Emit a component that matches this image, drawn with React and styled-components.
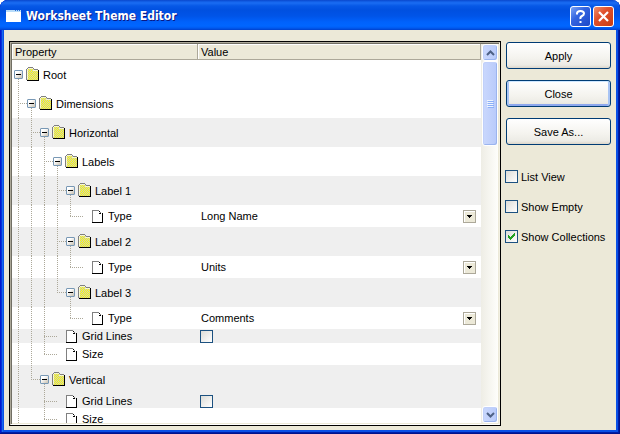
import React, { useId, useState } from 'react';
import styled, { createGlobalStyle, css } from 'styled-components';

const INK = '#000';
const FACE = '#ece9d8';
const SHADE = '#aca899';
const STRIPE = '#efefef';

const GlobalStyle = createGlobalStyle`
  *, *::before, *::after { box-sizing: border-box; }
  body {
    margin: 0;
    background: #fff;
    color: ${INK};
    font: 11px/14px "Liberation Sans", Arial, sans-serif;
  }
  button, select, input { font: inherit; color: inherit; }
`;

const Window = styled.main`
  display: flex;
  flex-direction: column;
  height: 100vh;
  padding: 0 4px 4px;
  overflow: hidden;
  border-radius: 8px 8px 0 0;
  background: #0a50e6;
  box-shadow:
    inset -1px -1px #00138c,
    inset 1px 0 #0019cf,
    inset -2px -2px #001ea8,
    inset 2px 0 #0831d9,
    inset 3px 0 #166aee;
`;

const TitleBar = styled.header`
  display: flex;
  flex: none;
  align-items: center;
  gap: 5px;
  height: 30px;
  margin: 0 -4px;
  padding: 2px 6px 0;
  background: linear-gradient(
    #0a47cc 0, #1464ec 2px, #1a6cf2 3px, #0658e6 6px, #0050e0 10px,
    #0054e8 16px, #0062fc 22px, #0066ff 26px, #005af0 28px, #0040cc 30px
  );
`;

const Title = styled.h1`
  flex: 1;
  margin: 0;
  color: #fff;
  font: bold 12px/16px "DejaVu Sans Condensed", "DejaVu Sans", sans-serif;
  text-shadow: 1px 1px #0a1883;
`;

const CaptionButtons = styled.div`
  display: flex;
  gap: 2px;
`;

const CaptionButton = styled.button`
  display: grid;
  place-items: center;
  width: 21px;
  height: 21px;
  padding: 0;
  border: 1px solid #fff;
  border-radius: 3px;
  background: ${(p) =>
    p.$danger
      ? 'linear-gradient(135deg, #f0906c, #e0502c 40%, #c83c10)'
      : 'linear-gradient(135deg, #7ca4f4, #3464e0 40%, #1c48c8)'};
`;

const Body = styled.div`
  display: flex;
  flex: 1;
  gap: 4px;
  min-height: 0;
  padding: 11px 5px 4px;
  background: ${FACE};
`;

const ListFrame = styled.section`
  display: flex;
  flex: 1;
  min-width: 0;
  border: 1px solid ${INK};
`;

const ListInner = styled.div`
  display: flex;
  flex: 1;
  min-width: 0;
  overflow: hidden;
  border: 1px solid;
  border-color: ${SHADE} #f1efe2 #fff ${SHADE};
  box-shadow: inset 1px 1px #716f64, inset -1px -1px ${FACE};
  padding: 1px;
  background: #fff;
`;

const Viewport = styled.div`
  flex: 1;
  min-width: 0;
  overflow: hidden;
`;

const Grid = styled.table`
  width: 100%;
  table-layout: fixed;
  border-spacing: 0;
`;

const HeadCell = styled.th`
  width: ${(p) => p.$width || 'auto'};
  height: 16px;
  padding: 0 3px;
  border-right: 1px solid ${SHADE};
  border-bottom: 1px solid ${SHADE};
  background: ${FACE};
  box-shadow: inset 1px 1px #fff;
  font-weight: normal;
  text-align: left;
`;

const Row = styled.tr`
  background: ${(p) => (p.$striped ? STRIPE : '#fff')};
`;

const Cell = styled.td`
  padding: 0;
`;

const TreeCell = styled.div`
  display: flex;
  align-items: center;
  height: ${(p) => p.$height}px;
  padding-left: 2px;
  white-space: nowrap;
`;

const dotsDown = `repeating-linear-gradient(${SHADE} 0 1px, transparent 1px 2px)`;
const dotsAcross = `repeating-linear-gradient(90deg, ${SHADE} 0 1px, transparent 1px 2px)`;

const guideStyles = {
  blank: css``,
  line: css`
    background: ${dotsDown} 4px 0 / 1px 100% no-repeat;
  `,
  tee: css`
    background:
      ${dotsDown} 4px 0 / 1px 100% no-repeat,
      ${dotsAcross} 4px 50% / 9px 1px no-repeat;
  `,
  end: css`
    background:
      ${dotsDown} 4px 0 / 1px 50% no-repeat,
      ${dotsAcross} 4px 50% / 9px 1px no-repeat;
  `,
};

const Guide = styled.span`
  flex: none;
  align-self: stretch;
  width: 13px;
  ${(p) => guideStyles[p.$kind]}
`;

const Knot = styled.span`
  display: flex;
  flex: none;
  align-items: center;
  align-self: stretch;
  width: 12px;
  background: ${(p) =>
    p.$leaf
      ? `${dotsAcross} 1px 50% / 4px 1px no-repeat`
      : `${dotsDown} 4px 100% / 1px 50% no-repeat`};
`;

const Expander = styled.button`
  display: grid;
  place-items: center;
  width: 9px;
  height: 9px;
  padding: 0;
  border: 1px solid #7898b5;
  border-radius: 1px;
  background: linear-gradient(135deg, #fff 30%, #c8c0b0);
`;

const Icon = styled.svg`
  flex: none;
  display: block;
  shape-rendering: crispEdges;
`;

const Name = styled.span`
  margin-left: 4px;
`;

const ValueCell = styled.div`
  display: flex;
  align-items: center;
  height: ${(p) => p.$height}px;
  padding: 0 5px 0 2px;
`;

const Picker = styled.span`
  display: grid;
  flex: 1;
  align-items: center;
`;

const PickerSelect = styled.select`
  grid-area: 1 / 1;
  width: 100%;
  padding: 0 16px 0 1px;
  border: 0;
  outline: 0;
  appearance: none;
  background: transparent;
`;

const PickerArrow = styled.span`
  display: grid;
  place-items: center;
  grid-area: 1 / 1;
  justify-self: end;
  width: 13px;
  height: 13px;
  border: 1px solid ${SHADE};
  background: ${FACE};
  box-shadow: inset 1px 1px #fff;
  pointer-events: none;
`;

const CheckBox = styled.span`
  display: grid;
  flex: none;
  place-items: center;
  width: 13px;
  height: 13px;
`;

const CheckInput = styled.input`
  grid-area: 1 / 1;
  width: 13px;
  height: 13px;
  margin: 0;
  appearance: none;
  border: 1px solid #1c5180;
  background: linear-gradient(135deg, #dcdcd7, #fff);
`;

const CheckMark = styled(Icon)`
  grid-area: 1 / 1;
  pointer-events: none;
`;

const ScrollTrack = styled.div`
  display: flex;
  flex: none;
  flex-direction: column;
  width: 17px;
  padding-left: 1px;
  background: linear-gradient(90deg, #eeede5, #fefefb);
`;

const scrollFace = css`
  display: grid;
  place-items: center;
  flex: none;
  width: 16px;
  padding: 0;
  border: 1px solid #fff;
  border-radius: 3px;
  background: linear-gradient(90deg, #cad8fd, #b8cafa);
  box-shadow: inset -1px -1px #9ab4ee, inset 1px 1px #c0d0fa;
`;

const ScrollButton = styled.button`
  ${scrollFace}
  height: 17px;
`;

const ScrollThumb = styled.div`
  ${scrollFace}
  height: 85px;
`;

const ScrollGap = styled.div`
  flex: 1;
`;

const Sidebar = styled.aside`
  display: flex;
  flex: none;
  flex-direction: column;
  gap: 25px;
  width: 106px;
`;

const Actions = styled.div`
  display: flex;
  flex-direction: column;
  gap: 11px;
  padding: 1px 0 0 1px;
`;

const PushButton = styled.button`
  height: 27px;
  padding: 0;
  border: 1px solid #003c74;
  border-radius: 3px;
  background: linear-gradient(#fff, #f4f3ee 60%, #ecebe5 88%, #dcd6ca);
  box-shadow: ${(p) =>
    p.$default
      ? 'inset 0 1px #cee7ff, inset 2px 0 #a8c4f4, inset -2px 0 #a8c4f4, inset 0 -2px #8ea8ee'
      : 'none'};
`;

const Options = styled.div`
  display: flex;
  flex-direction: column;
  gap: 17px;
`;

const Option = styled.label`
  display: flex;
  align-items: center;
  gap: 3px;
  height: 13px;
  white-space: nowrap;
`;

function FolderIcon() {
  const id = useId();
  return (
    <Icon width="13" height="15" viewBox="0 0 13 15" aria-hidden="true">
      <defs>
        <pattern id={id} width="2" height="2" patternUnits="userSpaceOnUse">
          <rect width="2" height="2" fill="#ffff00" />
          <rect x="1" width="1" height="1" fill="#c8c8c8" />
          <rect y="1" width="1" height="1" fill="#c8c8c8" />
        </pattern>
      </defs>
      <path d="M1 2h1V1h5v1h1v1h4v10H1z" fill={`url(#${id})`} />
      <path d="M2 0h5v1H2zM1 1h1v1H1zM7 1h1v1H7zM0 2h1v11H0zM8 2h4v1H8z" fill="#808080" />
      <path d="M2 1h5v1H2zM1 2h1v10H1zM7 3h5v1H7z" fill="#fff" opacity=".7" />
      <path d="M12 3h1v11H1v-1h11z" fill="#000" />
    </Icon>
  );
}

function FileIcon() {
  return (
    <Icon width="13" height="13" viewBox="0 0 13 13" aria-hidden="true">
      <path d="M2 1h6v1h1v1h1v1h1v8H2z" fill="#fff" />
      <path d="M1 0h7v1H1zM1 1h1v11H1zM8 1h1v1H8zM9 2h1v1H9z" fill="#808080" />
      <path d="M8 1h1v2h1v1h1v8H1v1h11V3h-1v1H8z" fill="#000" />
      <path d="M8 2h1v1H8z" fill="#fff" />
    </Icon>
  );
}

function Check({ checked, onChange, label, id }) {
  return (
    <CheckBox>
      <CheckInput type="checkbox" id={id} aria-label={label} checked={checked} onChange={onChange} />
      {checked && (
        <CheckMark width="7" height="7" viewBox="0 0 7 7" aria-hidden="true">
          <path d="M0 2h1v1h1v1h1V3h1V2h1V1h1V0h1v3H6v1H5v1H4v1H3v1H2V6H1V5H0z" fill="#21a121" />
        </CheckMark>
      )}
    </CheckBox>
  );
}

function Chevron({ down }) {
  return (
    <svg width="9" height="6" viewBox="0 0 9 6" aria-hidden="true">
      <path d={down ? 'M1 1l3.500 3.500L8 1' : 'M1 5l3.500-3.500L8 5'} fill="none" stroke="#4d6185" strokeWidth="2" />
    </svg>
  );
}

const kinds = { b: 'blank', l: 'line', t: 'tee', e: 'end' };

const rows = [
  { name: 'Root', guides: '', height: 29 },
  { name: 'Dimensions', guides: 't', height: 29 },
  { name: 'Horizontal', guides: 'lt', height: 29, striped: true },
  { name: 'Labels', guides: 'llt', height: 29 },
  { name: 'Label 1', guides: 'lllt', height: 29, striped: true },
  { name: 'Type', guides: 'lllle', height: 22, leaf: true, value: 'Long Name' },
  { name: 'Label 2', guides: 'lllt', height: 29, striped: true },
  { name: 'Type', guides: 'lllle', height: 22, leaf: true, value: 'Units' },
  { name: 'Label 3', guides: 'llle', height: 29, striped: true },
  { name: 'Type', guides: 'lllbe', height: 22, leaf: true, value: 'Comments' },
  { name: 'Grid Lines', guides: 'llt', height: 14, striped: true, leaf: true, toggle: true },
  { name: 'Size', guides: 'lle', height: 22, leaf: true },
  { name: 'Vertical', guides: 'le', height: 29, striped: true },
  { name: 'Grid Lines', guides: 'lbt', height: 14, striped: true, leaf: true, toggle: true },
  { name: 'Size', guides: 'lbe', height: 22, leaf: true },
];

function PropertyRow({ row }) {
  const [on, setOn] = useState(false);
  const [choice, setChoice] = useState(row.value);
  return (
    <Row $striped={row.striped}>
      <Cell>
        <TreeCell $height={row.height}>
          {[...row.guides].map((g, i) => (
            <Guide key={i} $kind={kinds[g]} />
          ))}
          <Knot $leaf={row.leaf}>
            {!row.leaf && (
              <Expander aria-label={`Collapse ${row.name}`}>
                <Icon width="5" height="1" viewBox="0 0 5 1" aria-hidden="true">
                  <path d="M0 0h5v1H0z" />
                </Icon>
              </Expander>
            )}
          </Knot>
          {row.leaf ? <FileIcon /> : <FolderIcon />}
          <Name>{row.name}</Name>
        </TreeCell>
      </Cell>
      <Cell>
        <ValueCell $height={row.height}>
          {row.value && (
            <Picker>
              <PickerSelect aria-label={row.name} value={choice} onChange={(e) => setChoice(e.target.value)}>
                <option>Long Name</option>
                <option>Units</option>
                <option>Comments</option>
              </PickerSelect>
              <PickerArrow>
                <Icon width="5" height="3" viewBox="0 0 5 3" aria-hidden="true">
                  <path d="M0 0h5v1H4v1H3v1H2V2H1V1H0z" />
                </Icon>
              </PickerArrow>
            </Picker>
          )}
          {row.toggle && <Check label={row.name} checked={on} onChange={() => setOn(!on)} />}
        </ValueCell>
      </Cell>
    </Row>
  );
}

function OptionBox({ label, initial = false }) {
  const id = useId();
  const [on, setOn] = useState(initial);
  return (
    <Option htmlFor={id}>
      <Check id={id} checked={on} onChange={() => setOn(!on)} />
      {label}
    </Option>
  );
}

export default function App() {
  return (
    <>
      <GlobalStyle />
      <Window>
        <TitleBar>
          <Icon width="15" height="12" viewBox="0 0 15 12" aria-hidden="true">
            <path d="M0 0h15v12H0z" fill="#fff" />
            <path d="M0 0h15v2H0z" fill="#b8dcfa" />
            <path d="M9 0h1v1H9zM11 0h1v1h-1zM13 0h1v1h-1z" fill="#2a70d8" />
          </Icon>
          <Title>Worksheet Theme Editor</Title>
          <CaptionButtons>
            <CaptionButton aria-label="Help">
              <svg width="11" height="13" viewBox="0 0 11 13" aria-hidden="true">
                <path d="M2 4.500V3.500Q2 1 5.500 1T9 3.500Q9 5 7 6T5.500 9" fill="none" stroke="#fff" strokeWidth="2" />
                <path d="M4.500 11h2v2h-2z" fill="#fff" />
              </svg>
            </CaptionButton>
            <CaptionButton $danger aria-label="Close window">
              <svg width="13" height="13" viewBox="0 0 13 13" aria-hidden="true">
                <path d="M2 2l9 9M11 2l-9 9" fill="none" stroke="#fff" strokeWidth="2.200" />
              </svg>
            </CaptionButton>
          </CaptionButtons>
        </TitleBar>
        <Body>
          <ListFrame>
            <ListInner>
              <Viewport>
                <Grid>
                  <thead>
                    <tr>
                      <HeadCell $width="186px">Property</HeadCell>
                      <HeadCell>Value</HeadCell>
                    </tr>
                  </thead>
                  <tbody>
                    {rows.map((row, i) => (
                      <PropertyRow key={i} row={row} />
                    ))}
                  </tbody>
                </Grid>
              </Viewport>
              <ScrollTrack>
                <ScrollButton aria-label="Scroll up">
                  <Chevron />
                </ScrollButton>
                <ScrollThumb>
                  <Icon width="7" height="8" viewBox="0 0 7 8" aria-hidden="true">
                    <path d="M0 0h6v1H0zM0 2h6v1H0zM0 4h6v1H0zM0 6h6v1H0z" fill="#eef4fe" />
                    <path d="M1 1h6v1H1zM1 3h6v1H1zM1 5h6v1H1zM1 7h6v1H1z" fill="#8cb0f8" />
                  </Icon>
                </ScrollThumb>
                <ScrollGap />
                <ScrollButton aria-label="Scroll down">
                  <Chevron down />
                </ScrollButton>
              </ScrollTrack>
            </ListInner>
          </ListFrame>
          <Sidebar>
            <Actions>
              <PushButton>Apply</PushButton>
              <PushButton $default>Close</PushButton>
              <PushButton>Save As...</PushButton>
            </Actions>
            <Options>
              <OptionBox label="List View" />
              <OptionBox label="Show Empty" />
              <OptionBox label="Show Collections" initial />
            </Options>
          </Sidebar>
        </Body>
      </Window>
    </>
  );
}
